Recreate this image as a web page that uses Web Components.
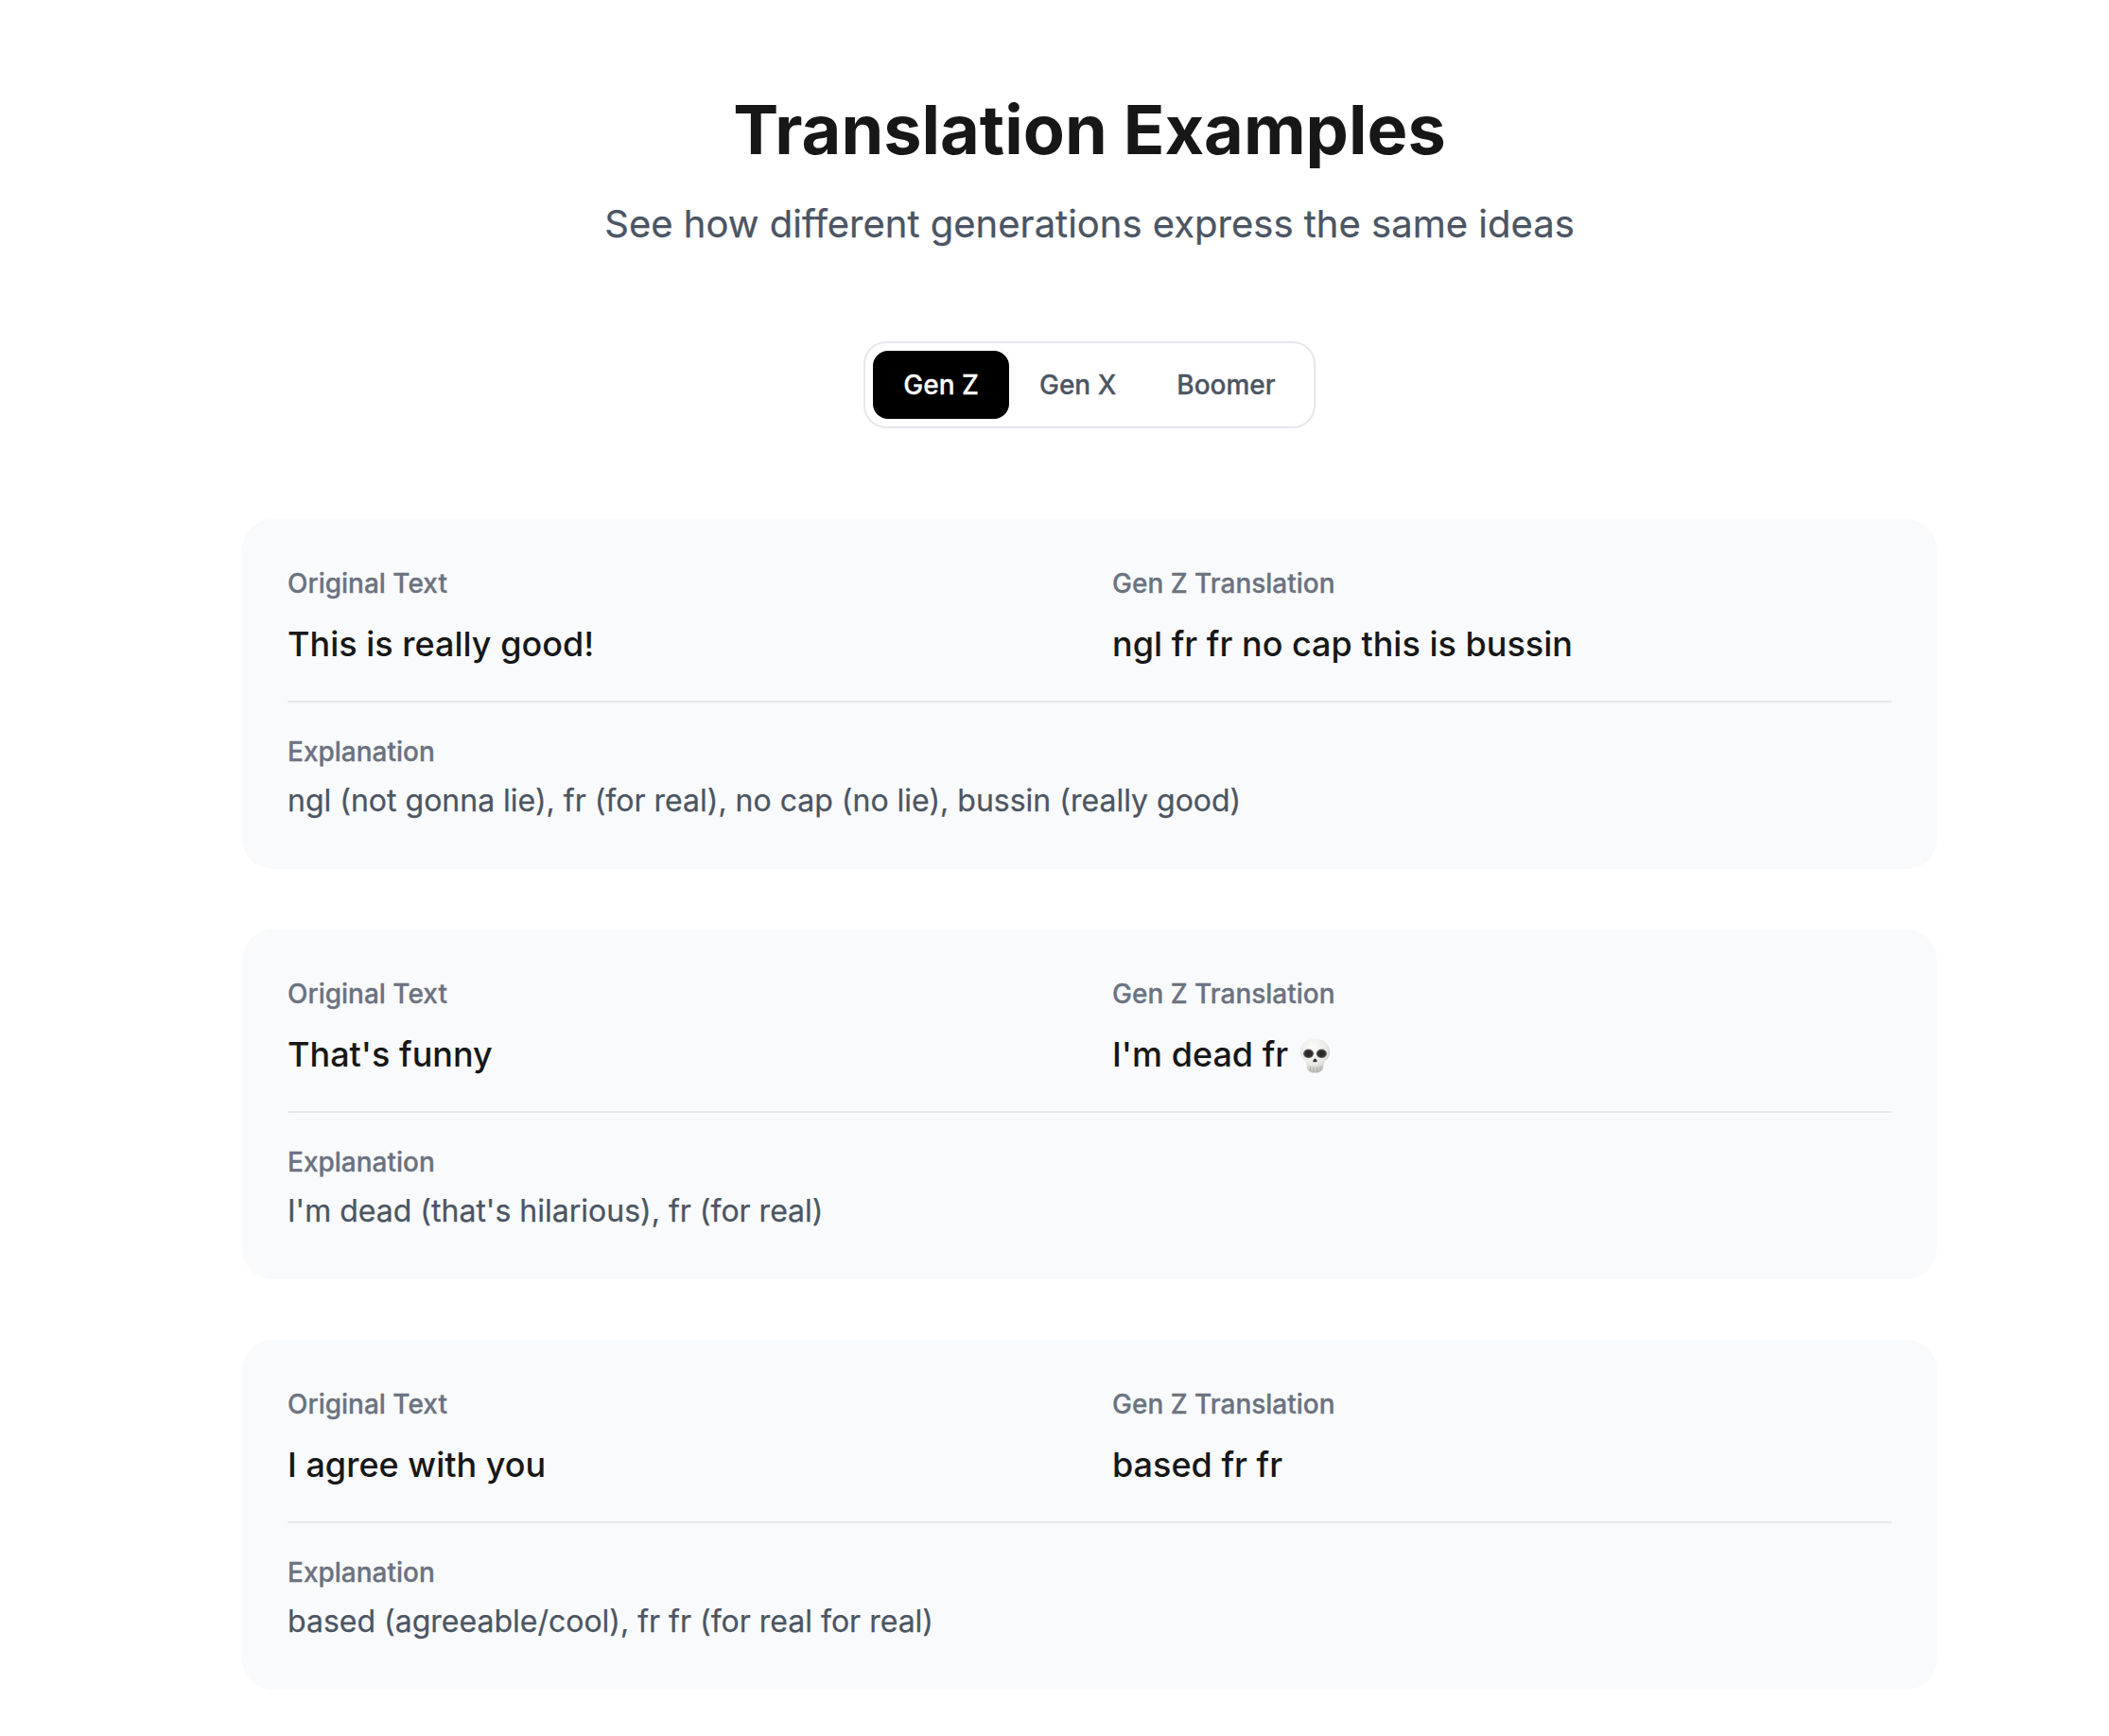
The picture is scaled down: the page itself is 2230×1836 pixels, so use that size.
<!DOCTYPE html>
<html lang="en">
<head>
<meta charset="utf-8">
<title>Translation Examples</title>
<style>
    html, body{
        margin: 0;
        padding: 0;
        background: #fff;
        font-family: Inter, "Noto Sans", sans-serif;
    }
</style>
</head>
<body>
<examples-page>
    <gen-tabs slot="tabs"></gen-tabs>
    <example-card original="This is really good!" translated="ngl fr fr no cap this is bussin" explanation="ngl (not gonna lie), fr (for real), no cap (no lie), bussin (really good)"></example-card>
    <example-card original="That's funny" translated="I'm dead fr" skull explanation="I'm dead (that's hilarious), fr (for real)"></example-card>
    <example-card original="I agree with you" translated="based fr fr" explanation="based (agreeable/cool), fr fr (for real for real)"></example-card>
</examples-page>

<script>
class ExamplesPage extends HTMLElement{
    constructor(){
        super()
        this.attachShadow({mode: 'open'})
        this.shadowRoot.innerHTML = `
            <style>
                :host{
                    display: block;
                    box-sizing: border-box;
                    width: 1792px;
                    margin-left: 256px;
                    padding-top: 97px;
                    padding-bottom: 47px;
                }
                h1{
                    margin: 0;
                    text-align: center;
                    font-size: 72px;
                    line-height: 80px;
                    font-weight: 700;
                    color: #171717;
                }
                p{
                    margin: 32px 0 0;
                    text-align: center;
                    font-size: 40px;
                    line-height: 56px;
                    color: #4b5563;
                    -webkit-text-stroke: .25px currentColor;
                }
                .tabs{
                    display: flex;
                    justify-content: center;
                    margin: 96px 0;
                }
                .list{
                    display: flex;
                    flex-direction: column;
                    gap: 64px;
                }
            </style>
            <h1>Translation Examples</h1>
            <p>See how different generations express the same ideas</p>
            <div class="tabs"><slot name="tabs"></slot></div>
            <div class="list"><slot></slot></div>
        `
    }
}

class GenTabs extends HTMLElement{
    constructor(){
        super()
        this.attachShadow({mode: 'open'})
        this.shadowRoot.innerHTML = `
            <style>
                :host{
                    display: inline-flex;
                    box-sizing: border-box;
                    padding: 8px;
                    border: 2px solid #e5e7eb;
                    border-radius: 24px;
                    background: #fff;
                }
                button{
                    border: 0;
                    background: none;
                    padding: 16px 32px;
                    border-radius: 16px;
                    font: 500 28px/40px Inter, sans-serif;
                    color: #4b5563;
                    -webkit-text-stroke: .3px currentColor;
                }
                button.active{
                    background: #000;
                    color: #fff;
                }
            </style>
            <button class="active">Gen Z</button>
            <button>Gen X</button>
            <button>Boomer</button>
        `
    }
}

const skull = `<svg viewBox="0 0 33 37" width="33" height="37" role="img" aria-label="skull">
        <defs>
            <radialGradient id="bone" cx="42%" cy="28%" r="75%">
                <stop offset="0" stop-color="#fdfdfc"/>
                <stop offset=".65" stop-color="#e8e8e5"/>
                <stop offset="1" stop-color="#b4b4b0"/>
            </radialGradient>
            <radialGradient id="eye">
                <stop offset="0" stop-color="#1f1f1f"/>
                <stop offset=".7" stop-color="#333"/>
                <stop offset="1" stop-color="#777"/>
            </radialGradient>
        </defs>
        <path d="M16.500 .5C7.500 .5 .8 6.500 .8 14.500c0 4 1.500 7 4.700 9.200 1 .7 1.500 1.500 1.700 2.800l.6 4.500c.5 3.500 3.700 5.500 8.700 5.500s8.200-2 8.700-5.500l.6-4.500c.2-1.300.7-2.100 1.700-2.800 3.200-2.200 4.700-5.200 4.700-9.200C32.200 6.500 25.500 .5 16.500 .5z" fill="url(#bone)"/>
        <ellipse cx="9.600" cy="16.300" rx="5.600" ry="4.800" fill="url(#eye)"/>
        <ellipse cx="23.400" cy="16.300" rx="5.600" ry="4.800" fill="url(#eye)"/>
        <path d="M16.500 21.500c-1.200 0-2.200 2-2.200 3 0 .8 1 .9 2.200.5 1.200.4 2.200.3 2.200-.5 0-1-1-3-2.200-3z" fill="#3c3c3c"/>
        <path d="M11.500 29.500v5M15 30v6.300M18.500 30v6.300M22 29.500v5" stroke="#a9a9a5" stroke-width=".9" fill="none"/>
    </svg>`

class ExampleCard extends HTMLElement{
    constructor(){
        super()
        this.attachShadow({mode: 'open'})
        this.shadowRoot.innerHTML = `
            <style>
                :host{
                    display: block;
                    box-sizing: border-box;
                    padding: 48px;
                    border-radius: 32px;
                    background: #f9fafb;
                }
                .cols{
                    display: grid;
                    grid-template-columns: 1fr 1fr;
                    gap: 48px;
                    padding-bottom: 32px;
                    border-bottom: 2px solid #e5e7eb;
                }
                .label{
                    font-size: 28px;
                    line-height: 40px;
                    font-weight: 500;
                    color: #6b7280;
                    -webkit-text-stroke: .3px currentColor;
                }
                .value{
                    margin-top: 16px;
                    font-size: 36px;
                    line-height: 56px;
                    height: 56px;
                    font-weight: 500;
                    color: #171717;
                }
                .value svg{
                    vertical-align: -7px;
                    margin-left: 12px;
                }
                .explain{
                    padding-top: 32px;
                }
                .text{
                    margin-top: 8px;
                    font-size: 32px;
                    line-height: 48px;
                    color: #4b5563;
                    -webkit-text-stroke: .25px currentColor;
                }
            </style>
            <div class="cols">
                <div>
                    <div class="label">Original Text</div>
                    <div class="value" id="original"></div>
                </div>
                <div>
                    <div class="label">Gen Z Translation</div>
                    <div class="value" id="translated"></div>
                </div>
            </div>
            <div class="explain">
                <div class="label">Explanation</div>
                <div class="text"></div>
            </div>
        `
    }
    connectedCallback(){
        this.shadowRoot.querySelector('#original').textContent = this.getAttribute('original')
        const translated = this.shadowRoot.querySelector('#translated')
        translated.textContent = this.getAttribute('translated')
        if(this.hasAttribute('skull')){
            translated.insertAdjacentHTML('beforeend', skull)
        }
        this.shadowRoot.querySelector('.text').textContent = this.getAttribute('explanation')
    }
}

customElements.define('gen-tabs', GenTabs)
customElements.define('example-card', ExampleCard)
customElements.define('examples-page', ExamplesPage)
</script>
</body>
</html>
